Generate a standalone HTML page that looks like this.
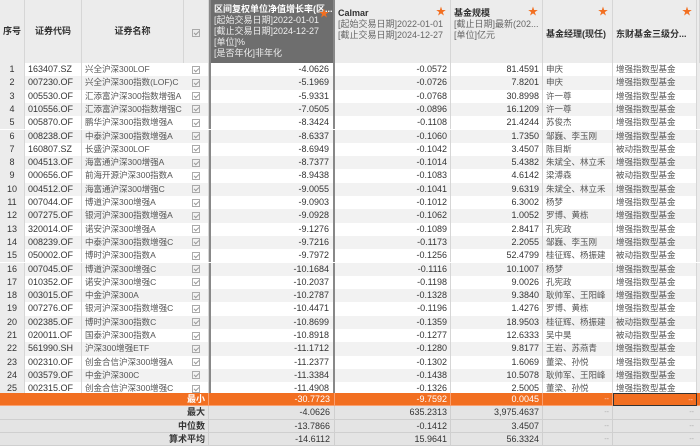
<!DOCTYPE html><html><head><meta charset="utf-8"><style>
*{margin:0;padding:0;box-sizing:border-box}
body{width:700px;height:447px;overflow:hidden;background:#fff;font-family:"Liberation Sans","Noto Sans CJK SC",sans-serif;font-size:9px;color:#333;position:relative}
.c{position:absolute;white-space:nowrap;overflow:hidden;line-height:13.3px;height:13.3px}
.hd{position:absolute;top:0;height:63px;background:#ececec;border-right:1px solid #d6d6d6;font-weight:bold;font-size:9px;color:#333;white-space:nowrap;overflow:hidden}
.star{position:absolute;top:3px;right:4px;color:#f26f21;font-size:10px}
.cb{display:inline-block;width:8px;height:8px;border:1px solid #aaa;margin-top:2.5px;position:relative}
.cb:after{content:"";position:absolute;left:2px;top:0px;width:2px;height:4px;border:solid #999;border-width:0 1px 1px 0;transform:rotate(45deg)}
.sub{font-weight:normal;color:#666;line-height:11px;font-size:9px}
</style></head><body>
<div class="hd" style="left:0;width:25px;text-align:center;line-height:63px">序号</div>
<div class="hd" style="left:25px;width:57px;text-align:center;line-height:63px">证券代码</div>
<div class="hd" style="left:82px;width:102px;text-align:center;line-height:63px">证券名称</div>
<div class="hd" style="left:184px;width:25px;text-align:center;padding-top:26px"><span class="cb"></span></div>
<div class="hd" style="left:209px;width:126px;background:#6e6e6e;color:#fff;padding:4px 0 0 3px;border-left:2px solid #888;border-right:2px solid #888"><span class="star" style="top:5px">★</span><div style="line-height:11px">区间复权单位净值增长率(区...</div><div class="sub" style="color:#eee">[起始交易日期]2022-01-01<br>[截止交易日期]2024-12-27<br>[单位]%<br>[是否年化]非年化</div></div>
<div class="hd" style="left:335px;width:116px;padding:8px 0 0 3px"><span class="star">★</span><div style="line-height:11px">Calmar</div><div class="sub">[起始交易日期]2022-01-01<br>[截止交易日期]2024-12-27</div></div>
<div class="hd" style="left:451px;width:92px;padding:8px 0 0 3px"><span class="star">★</span><div style="line-height:11px">基金规模</div><div class="sub">[截止日期]最新(202...<br>[单位]亿元</div></div>
<div class="hd" style="left:543px;width:70px;padding:27px 0 0 3px"><span class="star">★</span>基金经理(现任)</div>
<div class="hd" style="left:613px;width:84px;padding:27px 0 0 3px"><span class="star">★</span>东财基金三级分...</div>
<div class="hd" style="left:697px;width:3px"></div>
<div id="rows"></div>
<script>
var d=[
["163407.SZ","兴全沪深300LOF","-4.0626","-0.0572","81.4591","申庆","增强指数型基金"],
["007230.OF","兴全沪深300指数(LOF)C","-5.1969","-0.0726","7.8201","申庆","增强指数型基金"],
["005530.OF","汇添富沪深300指数增强A","-5.9331","-0.0768","30.8998","许一尊","增强指数型基金"],
["010556.OF","汇添富沪深300指数增强C","-7.0505","-0.0896","16.1209","许一尊","增强指数型基金"],
["005870.OF","鹏华沪深300指数增强A","-8.3424","-0.1108","21.4244","苏俊杰","增强指数型基金"],
["008238.OF","中泰沪深300指数增强A","-8.6337","-0.1060","1.7350","邹巍、李玉刚","增强指数型基金"],
["160807.SZ","长盛沪深300LOF","-8.6949","-0.1042","3.4507","陈目斯","被动指数型基金"],
["004513.OF","海富通沪深300增强A","-8.7377","-0.1014","5.4382","朱斌全、林立禾","增强指数型基金"],
["000656.OF","前海开源沪深300指数A","-8.9438","-0.1083","4.6142","梁溥森","被动指数型基金"],
["004512.OF","海富通沪深300增强C","-9.0055","-0.1041","9.6319","朱斌全、林立禾","增强指数型基金"],
["007044.OF","博道沪深300增强A","-9.0903","-0.1012","6.3002","杨梦","增强指数型基金"],
["007275.OF","银河沪深300指数增强A","-9.0928","-0.1062","1.0052","罗博、黄栋","增强指数型基金"],
["320014.OF","诺安沪深300增强A","-9.1276","-0.1089","2.8417","孔宪政","增强指数型基金"],
["008239.OF","中泰沪深300指数增强C","-9.7216","-0.1173","2.2055","邹巍、李玉刚","增强指数型基金"],
["050002.OF","博时沪深300指数A","-9.7972","-0.1256","52.4799","桂征辉、杨振建","被动指数型基金"],
["007045.OF","博道沪深300增强C","-10.1684","-0.1116","10.1007","杨梦","增强指数型基金"],
["010352.OF","诺安沪深300增强C","-10.2037","-0.1198","9.0026","孔宪政","增强指数型基金"],
["003015.OF","中金沪深300A","-10.2787","-0.1328","9.3840","耿帅军、王阳峰","增强指数型基金"],
["007276.OF","银河沪深300指数增强C","-10.4471","-0.1196","1.4276","罗博、黄栋","增强指数型基金"],
["002385.OF","博时沪深300指数C","-10.8699","-0.1359","18.9503","桂征辉、杨振建","被动指数型基金"],
["020011.OF","国泰沪深300指数A","-10.8918","-0.1277","12.6333","吴中昊","被动指数型基金"],
["561990.SH","沪深300增强ETF","-11.1712","-0.1280","9.8177","王岩、苏燕青","增强指数型基金"],
["002310.OF","创金合信沪深300增强A","-11.2377","-0.1302","1.6069","董梁、孙悦","增强指数型基金"],
["003579.OF","中金沪深300C","-11.3384","-0.1438","10.5078","耿帅军、王阳峰","增强指数型基金"],
["002315.OF","创金合信沪深300增强C","-11.4908","-0.1326","2.5005","董梁、孙悦","增强指数型基金"]];
var h="",H=13.3;
function c(x,w,y,t,s){return '<div class="c" style="left:'+x+'px;width:'+w+'px;top:'+y+'px;'+(s||'')+'">'+t+'</div>';}
var cj='font-size:8.5px;color:#555;';
d.forEach(function(r,i){var y=63+i*H,bg=i%2?'#f2f2f2':'#fff';
h+=c(0,697,y,'','background:'+bg);
h+=c(0,25,y,i+1,'background:#ececec;text-align:center;border-right:1px solid #d6d6d6');
h+=c(25,57,y,r[0],'padding-left:3px;border-right:1px solid #d6d6d6');
h+=c(82,102,y,r[1],'padding-left:3px;'+cj);
h+=c(184,25,y,'<span class="cb"></span>','text-align:center;border-right:1px solid #d6d6d6');
h+=c(209,126,y,r[2],'text-align:right;padding-right:4px;border-left:2px solid #888;border-right:2px solid #888');
h+=c(335,116,y,r[3],'text-align:right;padding-right:3px;border-right:1px solid #d6d6d6');
h+=c(451,92,y,r[4],'text-align:right;padding-right:3px;border-right:1px solid #d6d6d6');
h+=c(543,70,y,r[5],'padding-left:3px;border-right:1px solid #d6d6d6;'+cj);
h+=c(613,84,y,r[6],'padding-left:3px;border-right:1px solid #d6d6d6;'+cj);
h+=c(697,3,y,'','background:#ececec');});
var f=[["最小","-30.7723","-9.7592","0.0045"],["最大","-4.0626","635.2313","3,975.4637"],["中位数","-13.7866","-0.1412","3.4507"],["算术平均","-14.6112","15.9641","56.3324"]];
f.forEach(function(r,i){var y=393+i*H,o=i==0,bg=o?'#f26f21':'#e4e4e4',col=o?'#fff':'#333',bd=o?'#f9a070':'#cfcfcf';
h+=c(0,700,y,'','background:'+bg+';border-bottom:1px solid '+bd);
h+=c(0,209,y,r[0],'text-align:right;padding-right:3px;font-weight:bold;color:'+col+';border-right:1px solid '+bd);
h+=c(209,126,y,r[1],'text-align:right;padding-right:4px;color:'+col+';border-right:1px solid '+bd);
h+=c(335,116,y,r[2],'text-align:right;padding-right:3px;color:'+col+';border-right:1px solid '+bd);
h+=c(451,92,y,r[3],'text-align:right;padding-right:3px;color:'+col+';border-right:1px solid '+bd);
h+=c(543,70,y,'--','text-align:right;padding-right:3px;font-size:7px;color:'+(o?'#fcc':'#aaa')+';border-right:1px solid '+bd);
h+=c(613,84,y,'--','text-align:right;padding-right:3px;font-size:7px;color:'+(o?'#fcc':'#aaa')+(o?';border:1px solid #333':''));});
document.getElementById('rows').innerHTML=h;
</script>
</body></html>
